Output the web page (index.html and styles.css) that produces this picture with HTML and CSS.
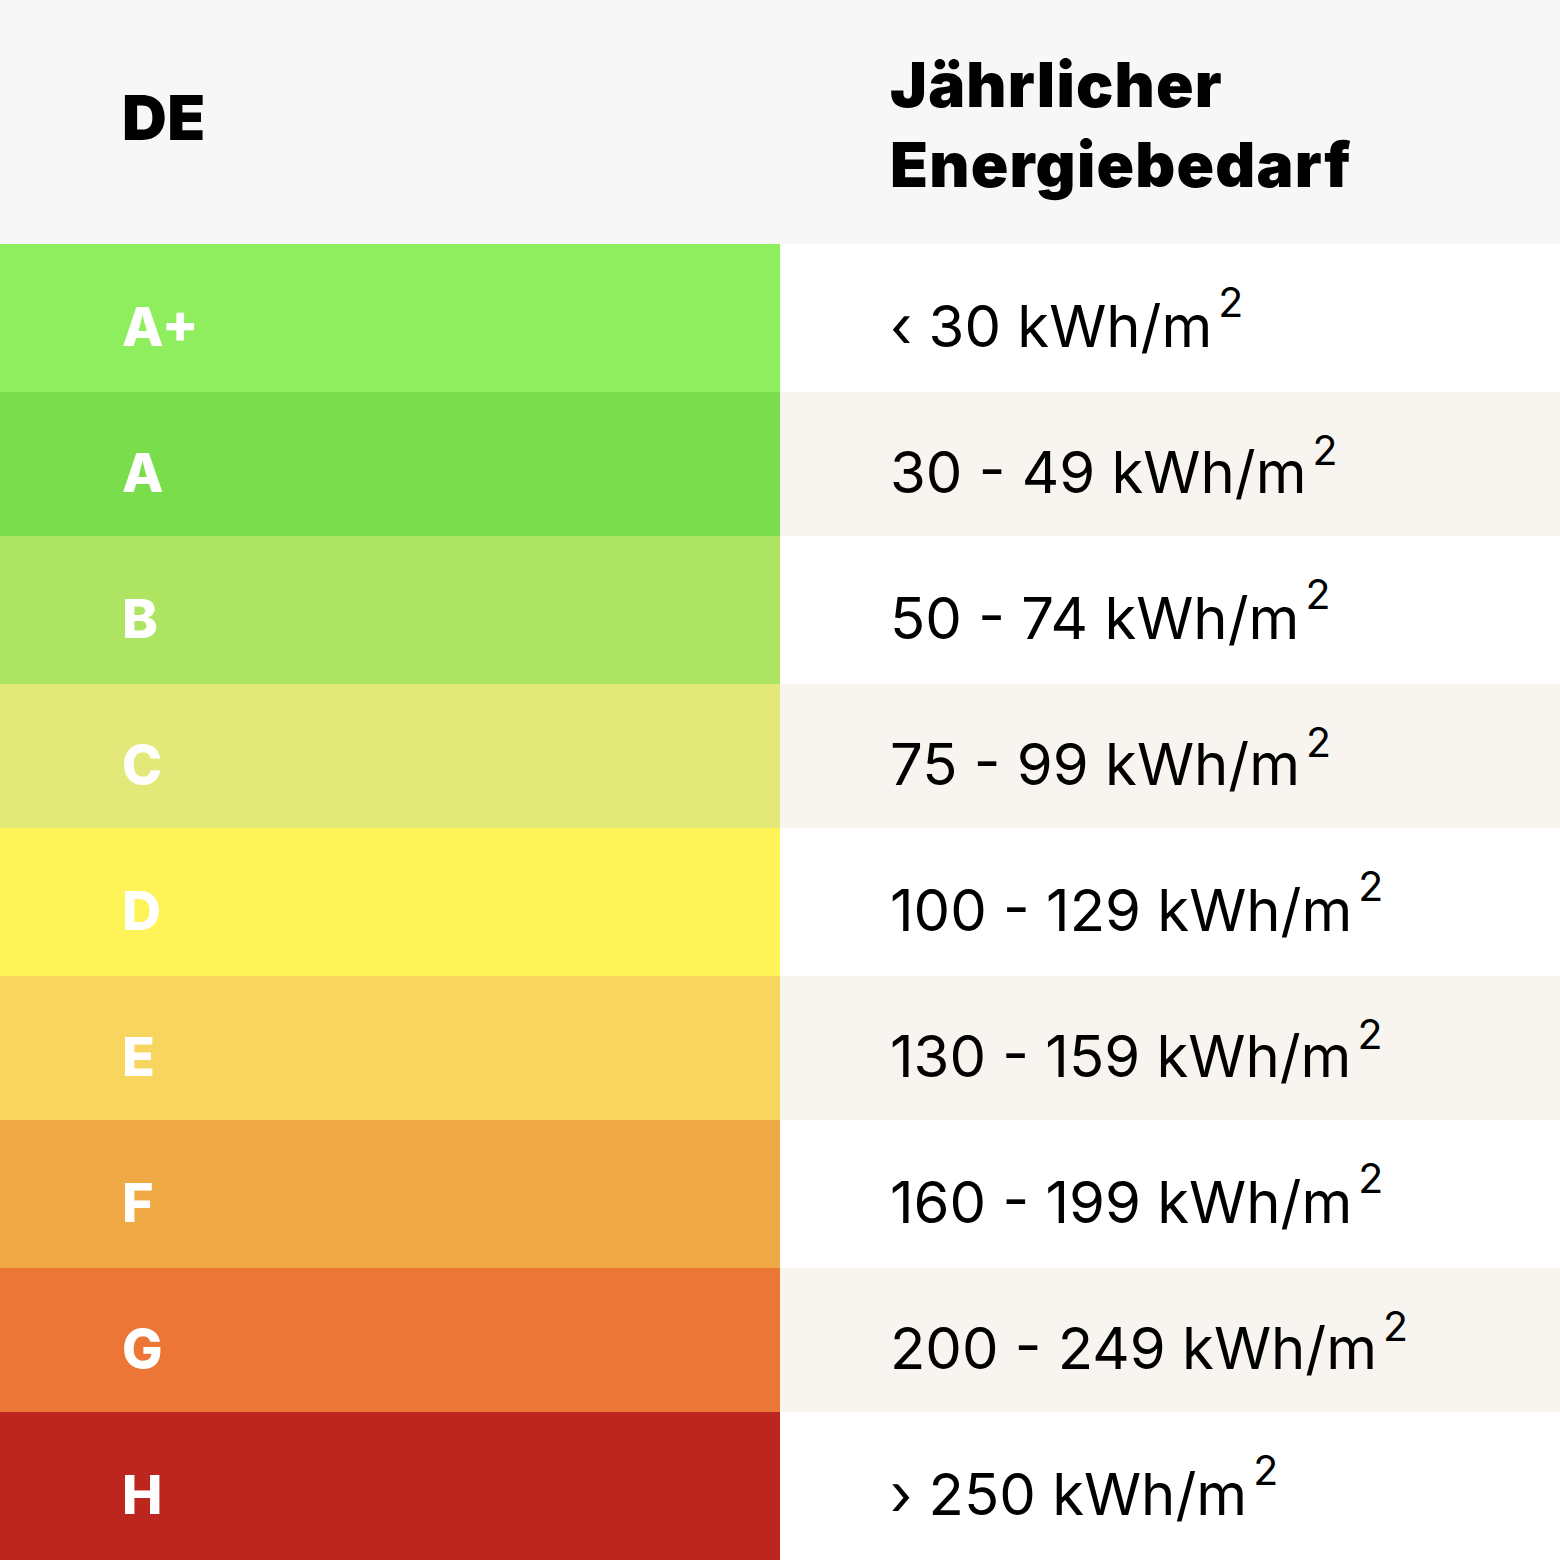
FILE: index.html
```html
<!DOCTYPE html>
<html lang="de">
<head>
<meta charset="utf-8">
<link rel="stylesheet" href="styles.css">
</head>
<body>
<div class="table">
  <div class="head head-left"><span class="title">DE</span></div>
  <div class="head head-right"><span class="title">Jährlicher<br>Energiebedarf</span></div>

  <div class="cls c-ap">A+</div>
  <div class="val">‹ 30 kWh/m<sup>2</sup></div>

  <div class="cls c-a">A</div>
  <div class="val alt">30 - 49 kWh/m<sup>2</sup></div>

  <div class="cls c-b">B</div>
  <div class="val">50 - 74 kWh/m<sup>2</sup></div>

  <div class="cls c-c">C</div>
  <div class="val alt">75 - 99 kWh/m<sup>2</sup></div>

  <div class="cls c-d">D</div>
  <div class="val">100 - 129 kWh/m<sup>2</sup></div>

  <div class="cls c-e">E</div>
  <div class="val alt">130 - 159 kWh/m<sup>2</sup></div>

  <div class="cls c-f">F</div>
  <div class="val">160 - 199 kWh/m<sup>2</sup></div>

  <div class="cls c-g">G</div>
  <div class="val alt">200 - 249 kWh/m<sup>2</sup></div>

  <div class="cls c-h">H</div>
  <div class="val">› 250 kWh/m<sup>2</sup></div>
</div>
</body>
</html>
```

FILE: styles.css
```css
html, body {
  margin: 0;
  padding: 0;
  background: #ffffff;
}
.table {
  display: grid;
  grid-template-columns: 780px 780px;
  grid-template-rows: 244px 148px 144px 148px 144px 148px 144px 148px 144px 148px;
  width: 1560px;
  font-family: Inter, "Noto Sans", sans-serif;
}
.head {
  background: #f7f7f7;
  display: flex;
  align-items: center;
  color: #000;
}
.head-left { padding-left: 122px; }
.head-right { padding-left: 110px; padding-top: 6px; }
.title {
  font-weight: 900;
  font-size: 62px;
  line-height: 80px;
  letter-spacing: 1.2px;
}
.head-left .title { margin-top: -8px; letter-spacing: 0.5px; }
.cls {
  display: flex;
  align-items: center;
  padding-left: 122px;
  padding-top: 16px;
  color: #ffffff;
  font-weight: 800;
  font-size: 54px;
}
.val {
  display: flex;
  align-items: center;
  padding-left: 110px;
  padding-top: 16px;
  color: #000;
  font-weight: 400;
  font-size: 58px;
  background: #ffffff;
}
.val.alt { background: #f8f5f1; }
.val sup {
  font-size: 41px;
  align-self: flex-start;
  margin-top: 22px;
  margin-left: 6px;
  line-height: 1;
}
.c-ap { background: #8eee5e; }
.c-a  { background: #7add4b; }
.c-b  { background: #ade563; }
.c-c  { background: #e3e978; }
.c-d  { background: #fff457; }
.c-e  { background: #f8d55e; }
.c-f  { background: #f0aa45; }
.c-g  { background: #ec7635; }
.c-h  { background: #bc261e; }
```
